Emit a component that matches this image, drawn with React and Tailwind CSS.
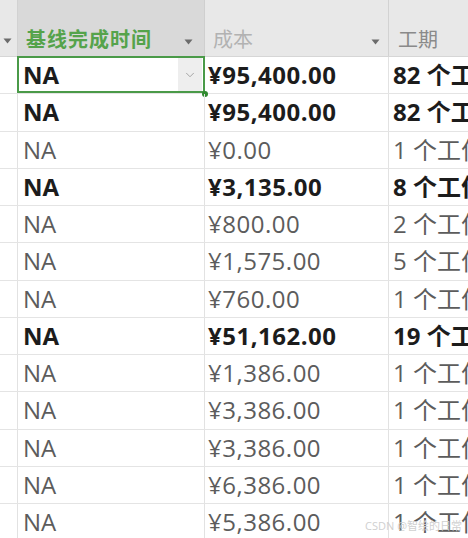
import { ChevronDown } from 'lucide-react';

const rows = [
  { na: 'NA', cost: '¥95,400.00', dur: '82 个工作日', bold: true, active: true },
  { na: 'NA', cost: '¥95,400.00', dur: '82 个工作日', bold: true },
  { na: 'NA', cost: '¥0.00', dur: '1 个工作日' },
  { na: 'NA', cost: '¥3,135.00', dur: '8 个工作日', bold: true },
  { na: 'NA', cost: '¥800.00', dur: '2 个工作日' },
  { na: 'NA', cost: '¥1,575.00', dur: '5 个工作日' },
  { na: 'NA', cost: '¥760.00', dur: '1 个工作日' },
  { na: 'NA', cost: '¥51,162.00', dur: '19 个工作日', bold: true },
  { na: 'NA', cost: '¥1,386.00', dur: '1 个工作日' },
  { na: 'NA', cost: '¥3,386.00', dur: '1 个工作日' },
  { na: 'NA', cost: '¥3,386.00', dur: '1 个工作日' },
  { na: 'NA', cost: '¥6,386.00', dur: '1 个工作日' },
  { na: 'NA', cost: '¥5,386.00', dur: '1 个工作日' },
];

const font = { fontFamily: '"Open Sans", "Noto Sans CJK SC", sans-serif' };

const Arrow = () => (
  <svg width="9" height="6" viewBox="0 0 9 6" className="shrink-0">
    <path d="M0.5 0.5 L8.5 0.5 L4.5 5.5 Z" fill="#6b6b6b" />
  </svg>
);

export default function App() {
  return (
    <div
      className="w-[468px] h-[538px] overflow-hidden bg-white relative"
      style={font}
    >
      {/* header */}
      <div className="grid grid-cols-[18px_187px_184px_1fr] h-[57px] border-b border-[#d6d6d6]">
        <div className="bg-[#e8e8e8] border-r border-[#d2d2d2] flex items-end pb-[12px] pl-[3px]">
          <Arrow />
        </div>
        <div className="bg-[#d9d9d9] border-r border-[#cfcfcf] flex items-end justify-between pb-[6px] pl-[8px] pr-[11px]">
          <span className="text-[20px] leading-none font-bold text-[#55a34b] tracking-[1px]">
            基线完成时间
          </span>
          <span className="pb-[5px]"><Arrow /></span>
        </div>
        <div className="bg-[#e8e8e8] border-r border-[#d2d2d2] flex items-end justify-between pb-[6px] pl-[8px] pr-[8px]">
          <span className="text-[20px] leading-none text-[#b2b2b2]">成本</span>
          <span className="pb-[5px]"><Arrow /></span>
        </div>
        <div className="bg-[#e8e8e8] flex items-end pb-[6px] pl-[9px]">
          <span className="text-[20px] leading-none text-[#8a8a8a]">工期</span>
        </div>
      </div>

      {/* body */}
      {rows.map((r, i) => {
        const weight = r.bold ? 'font-bold text-[#1c1c1c]' : 'font-normal text-[#5c5c5c]';
        return (
          <div
            key={i}
            className="grid grid-cols-[18px_187px_184px_1fr] h-[37.25px] border-b border-[#e4e4e4] text-[24px] leading-none"
          >
            <div className="border-r border-[#e2e2e2]" />
            <div className="border-r border-[#e2e2e2] relative flex items-center pl-[5px]">
              <span className={weight}>{r.na}</span>
              {r.active && (
                <>
                  <div className="absolute inset-[-1px_-1px_0_-1px] border-2 border-[#4a9a48] pointer-events-none" />
                  <div className="absolute right-[2px] top-[1px] bottom-[2px] w-[24px] bg-[#eeeeee] flex items-center justify-center">
                    <ChevronDown size={14} color="#9a9a9a" strokeWidth={1.5} />
                  </div>
                  <div className="absolute right-[-4px] bottom-[-4px] w-[6px] h-[6px] rounded-full bg-[#2f8a2f]" />
                </>
              )}
            </div>
            <div className="border-r border-[#e2e2e2] flex items-center pl-[3px]">
              <span className={`${weight} tracking-[0.5px]`}>{r.cost}</span>
            </div>
            <div className="flex items-center pl-[4px] whitespace-nowrap overflow-hidden">
              <span className={weight}>{r.dur}</span>
            </div>
          </div>
        );
      })}

      <div className="absolute right-[6px] bottom-[7px] text-[11px] text-[#d0d0d0] leading-none">
        CSDN @智绘的日常
      </div>
    </div>
  );
}
